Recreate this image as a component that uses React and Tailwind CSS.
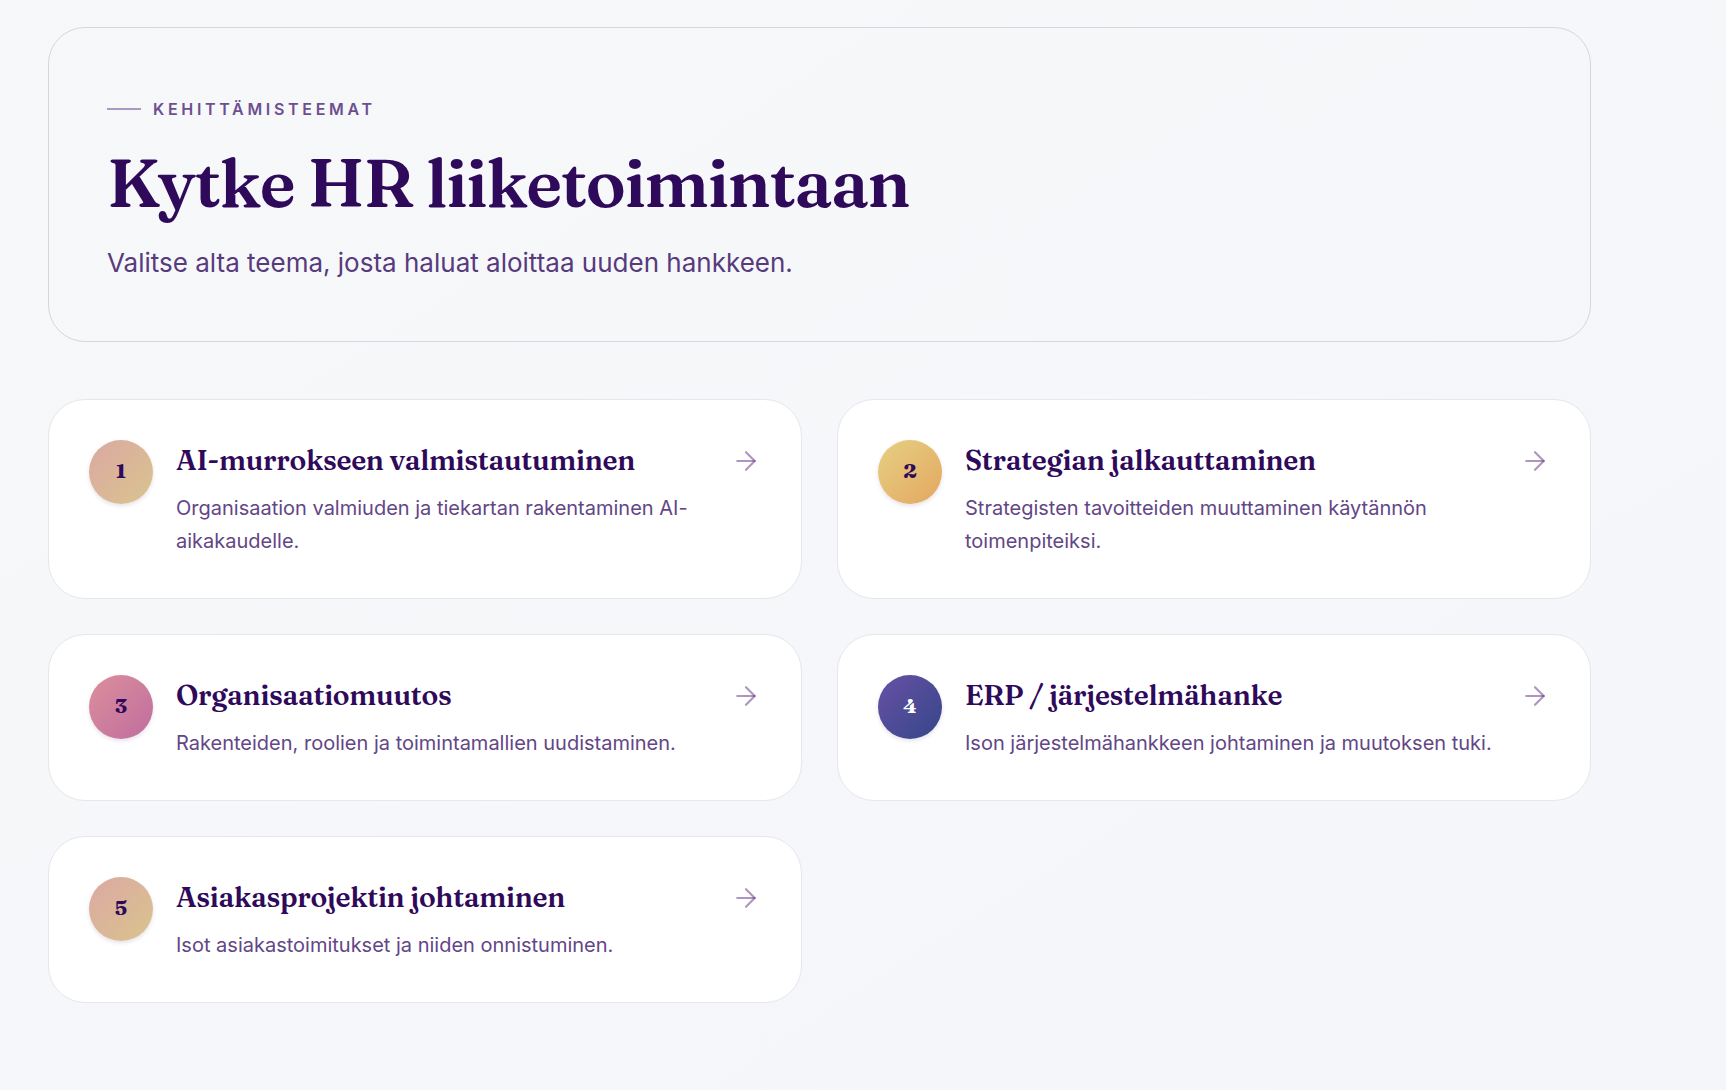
import { ArrowRight } from "lucide-react";

const themes = [
  {
    title: "AI-murrokseen valmistautuminen",
    text: "Organisaation valmiuden ja tiekartan rakentaminen AI-aikakaudelle.",
    badge: "from-[#dba8a2] to-[#d9c48d] text-[#2f0a5b]",
  },
  {
    title: "Strategian jalkauttaminen",
    text: "Strategisten tavoitteiden muuttaminen käytännön toimenpiteiksi.",
    badge: "from-[#e5d083] to-[#e3a760] text-[#2f0a5b]",
  },
  {
    title: "Organisaatiomuutos",
    text: "Rakenteiden, roolien ja toimintamallien uudistaminen.",
    badge: "from-[#dc8f9b] to-[#c06d9e] text-[#2f0a5b]",
  },
  {
    title: "ERP / järjestelmähanke",
    text: "Ison järjestelmähankkeen johtaminen ja muutoksen tuki.",
    badge: "from-[#6750a4] to-[#34468a] text-white",
  },
  {
    title: "Asiakasprojektin johtaminen",
    text: "Isot asiakastoimitukset ja niiden onnistuminen.",
    badge: "from-[#dba8a2] to-[#d9c48d] text-[#2f0a5b]",
  },
];

function ThemeCard({ number, title, text, badge }) {
  return (
    <a
      href="#"
      className="flex items-start rounded-[37px] border border-[#e6e6ed] bg-white p-10"
    >
      <span
        className={`flex size-16 shrink-0 items-center justify-center rounded-full bg-linear-135 pb-0.5 font-['Fraunces','Liberation_Serif',serif] text-[21px] font-bold shadow-[0_2px_4px_rgba(47,10,91,0.12)] ${badge}`}
      >
        {number}
      </span>
      <div className="ml-[23px] min-w-0 flex-1">
        <div className="flex items-center justify-between">
          <h2 className="font-['Fraunces','Liberation_Serif',serif] text-[28px] leading-[41px] font-semibold tracking-[-0.01em] text-[#2f0a5b]">
            {title}
          </h2>
          <ArrowRight size={30} strokeWidth={1.75} color="rgba(91,47,130,0.5)" className="shrink-0" />
        </div>
        <p className="mt-[11px] mr-12 text-[20px] leading-[33px] text-[#634686]">{text}</p>
      </div>
    </a>
  );
}

export default function App() {
  return (
    <div className="min-h-screen bg-linear-to-br from-[#f6f8fa] to-[#f5f6f9] pt-[27px] pr-[135px] pb-20 pl-12 font-['Inter',sans-serif]">
      <main>
        <header className="rounded-[37px] border border-[#d6d6e0] px-[58px] pt-[69px] pb-[57px]">
          <p className="flex items-center gap-3 text-base leading-6 font-semibold tracking-[0.23em] text-[#6d4f90] uppercase">
            <span className="h-0.5 w-[34px] bg-[#aa98c0]" />
            Kehittämisteemat
          </p>
          <h1 className="mt-6 font-['Fraunces','Liberation_Serif',serif] text-[67px] leading-[76px] font-semibold tracking-[-0.02em] text-[#2f0a5b]">
            Kytke HR liiketoimintaan
          </h1>
          <p className="mt-[21px] text-[26px] leading-[42px] text-[#583a7e]">
            Valitse alta teema, josta haluat aloittaa uuden hankkeen.
          </p>
        </header>
        <div className="mt-[57px] grid grid-cols-2 gap-[35px]">
          {themes.map((theme, i) => (
            <ThemeCard key={theme.title} number={i + 1} {...theme} />
          ))}
        </div>
      </main>
    </div>
  );
}
